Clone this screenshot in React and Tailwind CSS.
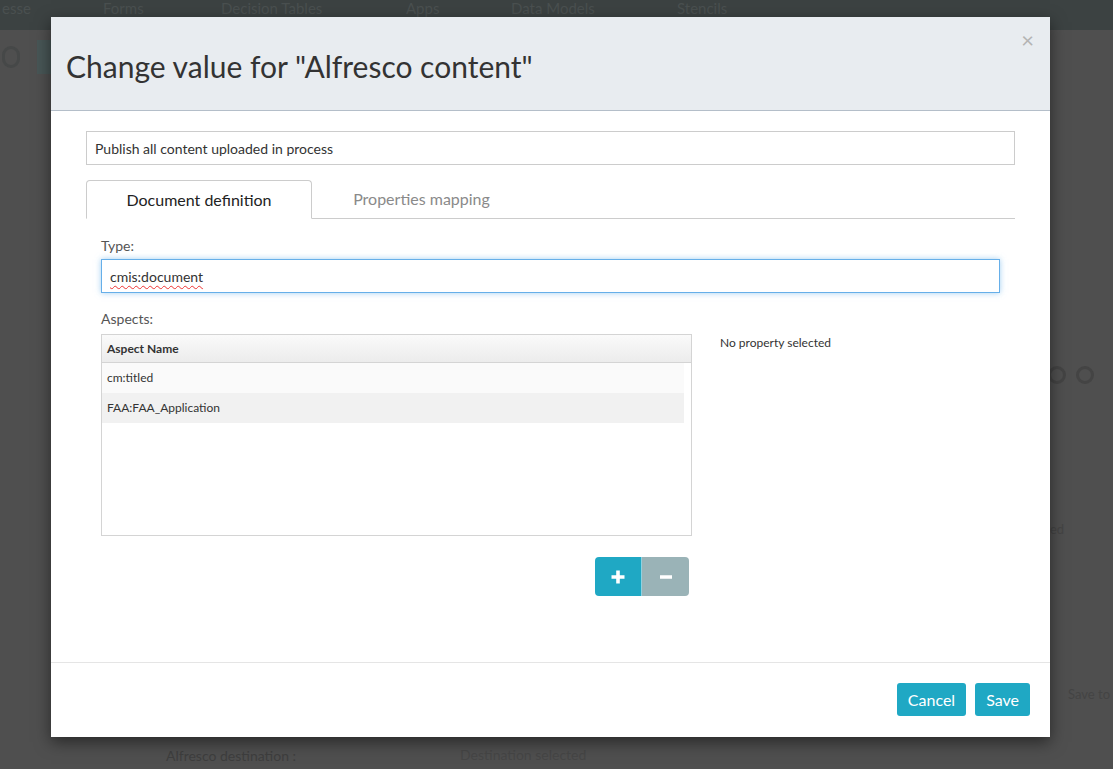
import React from "react";

function BackdropPage() {
  // faint app behind the overlay
  return (
    <div className="absolute inset-0 text-[#4a5050]">
      <div className="h-[30px] bg-[#3c4242] flex items-start pt-[1px] text-[15px] leading-[15px]">
        <span className="w-[103px] pl-[2px]">esse</span>
        <span className="w-[118px]">Forms</span>
        <span className="w-[185px]">Decision Tables</span>
        <span className="w-[105px]">Apps</span>
        <span className="w-[166px]">Data Models</span>
        <span>Stencils</span>
      </div>
      <div className="absolute left-[37px] top-[40px] w-[14px] h-[34px] bg-[#485656]" />
      <div className="absolute left-[2px] top-[46px] w-[18px] h-[22px] rounded-full border-[3px] border-[#464848]" />
      <div className="absolute left-[1048px] top-[366px] flex gap-[10px]">
        <span className="w-[18px] h-[18px] rounded-full border-[3px] border-[#444444]" />
        <span className="w-[18px] h-[18px] rounded-full border-[3px] border-[#444444]" />
      </div>
      <div className="absolute left-[1050px] top-[520px] text-[13px] text-[#444]">ed</div>
      <div className="absolute left-[1068px] top-[685px] text-[13px] text-[#444]">Save to</div>
      <div className="absolute left-[166px] top-[745px] text-[14px] text-[#3e3e3e]">Alfresco destination :</div>
      <div className="absolute left-[460px] top-[744px] text-[14px] text-[#464646]">Destination selected</div>
    </div>
  );
}

function Tabs() {
  return (
    <div className="flex mt-[15px] h-[39px] border-b border-[#cccccc]">
      <div className="w-[226px] -mb-px bg-white border border-[#cccccc] border-b-white rounded-t-[4px] flex items-center justify-center text-[16px] text-[#222]">
        Document definition
      </div>
      <div className="w-[219px] flex items-center justify-center text-[16px] text-[#8a8a8a]">
        Properties mapping
      </div>
    </div>
  );
}

function AspectsTable() {
  const rows = [
    { name: "cm:titled", bg: "bg-[#fafafa]" },
    { name: "FAA:FAA_Application", bg: "bg-[#f1f1f1]" },
  ];
  return (
    <div className="w-[591px] h-[202px] border border-[#d4d4d4] bg-white">
      <div className="h-[28px] border-b border-[#d4d4d4] bg-gradient-to-b from-[#fafafa] to-[#ececec] flex items-center px-[5px] text-[12px] font-bold text-[#333]">
        Aspect Name
      </div>
      <div className="pr-[7px]">
        {rows.map((r) => (
          <div key={r.name} className={`h-[30px] flex items-center px-[5px] text-[12px] text-[#333] ${r.bg}`}>
            {r.name}
          </div>
        ))}
      </div>
    </div>
  );
}

export default function App() {
  return (
    <div
      className="relative w-full h-[769px] overflow-hidden bg-[#4f4f4f]"
      style={{ fontFamily: "Lato, 'Open Sans', 'Liberation Sans', sans-serif" }}
    >
      <BackdropPage />

      <div className="absolute left-[51px] top-[17px] w-[999px] h-[720px] bg-white shadow-[0_5px_15px_rgba(0,0,0,0.5)] flex flex-col">
        {/* header */}
        <div className="relative h-[94px] bg-[#e8ecf0] border-b border-[#b4bec9] flex items-center pl-[15px] pt-[4px]">
          <h2 className="text-[30px] text-[#333] leading-none">Change value for "Alfresco content"</h2>
          <span className="absolute right-[16px] top-[12px] text-[22px] text-[#b4b4b4] leading-none">×</span>
        </div>

        {/* body */}
        <div className="flex-1 px-[35px] pt-[20px]">
          <div className="h-[34px] border border-[#cccccc] flex items-center px-[8px] text-[14px] text-[#333]">
            Publish all content uploaded in process
          </div>

          <Tabs />

          <div className="px-[15px]">
            <div className="mt-[16px] text-[14px] text-[#555]">Type:</div>
            <div className="mt-[3px] h-[34px] border border-[#66afe9] shadow-[0_0_6px_rgba(102,175,233,0.6)] flex items-center px-[8px] text-[14px] text-[#333]">
              <span className="underline decoration-wavy decoration-[#e33] underline-offset-[3px] decoration-1">cmis:document</span>
            </div>

            <div className="mt-[15px] text-[14px] text-[#555]">Aspects:</div>
            <div className="mt-[5px] flex">
              <div className="flex flex-col items-end">
                <AspectsTable />
                <div className="mt-[21px] mr-[3px] flex rounded-[4px] overflow-hidden">
                  <button className="w-[47px] h-[39px] bg-[#1fa8c4] text-white flex items-center justify-center border-r border-[#8ed2e0]">
                    <svg width="16" height="16" viewBox="0 0 16 16">
                      <path d="M8 1.5v13M1.5 8h13" stroke="white" strokeWidth="3.6" />
                    </svg>
                  </button>
                  <button className="w-[47px] h-[39px] bg-[#9ab3b7] text-white flex items-center justify-center">
                    <svg width="14" height="14" viewBox="0 0 14 14">
                      <path d="M1 7h12" stroke="white" strokeWidth="3.6" />
                    </svg>
                  </button>
                </div>
              </div>
              <div className="ml-[28px] text-[12px] text-[#333]">No property selected</div>
            </div>
          </div>
        </div>

        {/* footer */}
        <div className="h-[75px] border-t border-[#e5e5e5] flex items-center justify-end gap-[9px] pr-[20px] pb-[1px]">
          <button className="h-[33px] px-[11px] rounded-[3px] bg-[#1fa8c4] text-white text-[16px]">Cancel</button>
          <button className="h-[33px] px-[11px] rounded-[3px] bg-[#1fa8c4] text-white text-[16px]">Save</button>
        </div>
      </div>
    </div>
  );
}
